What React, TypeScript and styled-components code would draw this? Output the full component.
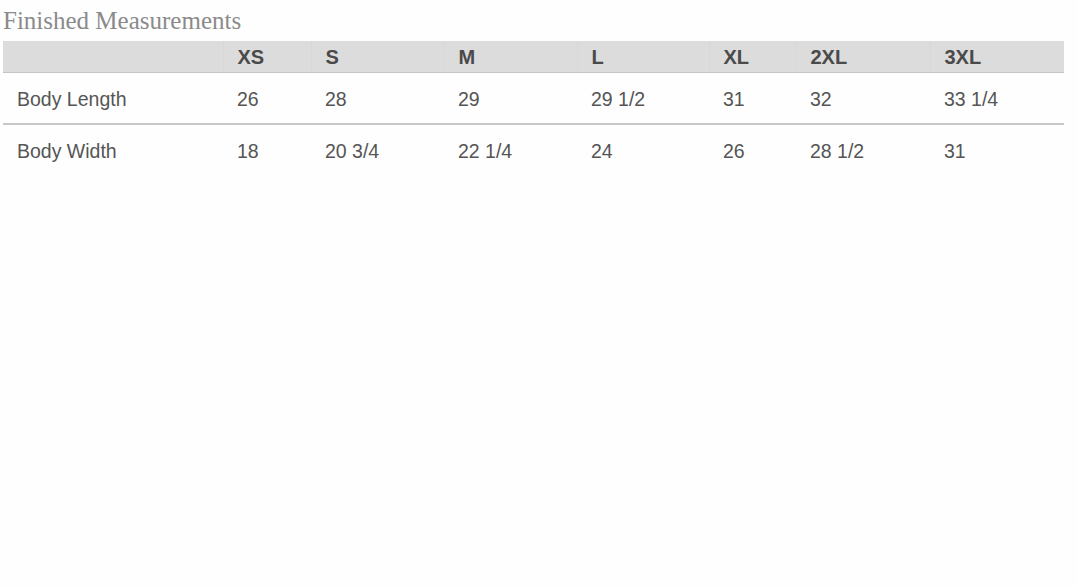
import React from "react";
import styled, {createGlobalStyle} from "styled-components";

const sizes = ["XS", "S", "M", "L", "XL", "2XL", "3XL"];
const widths = [220, 88, 133, 133, 132, 87, 134, 134];

const rows = [
  {label: "Body Length", values: ["26", "28", "29", "29 1/2", "31", "32", "33 1/4"]},
  {label: "Body Width", values: ["18", "20 3/4", "22 1/4", "24", "26", "28 1/2", "31"]},
];

const GlobalStyle = createGlobalStyle`
  body {
    margin: 0;
    background: #fefefe;
  }
`;

const Page = styled.div`
  padding: 5px 14px 0 3px;
`;

const Title = styled.h3`
  margin: 0 0 5px;
  font-family: "Liberation Serif", "Times New Roman", serif;
  font-weight: normal;
  font-size: 25px;
  line-height: 31px;
  color: #8a8a8a;
`;

const Table = styled.table`
  width: 1061px;
  border-collapse: collapse;
  table-layout: fixed;
  font-family: "Liberation Sans", Arial, sans-serif;
`;

const HeadCell = styled.th`
  padding: 5px 14px 4px;
  line-height: 22px;
  text-align: left;
  font-size: 20px;
  font-weight: bold;
  color: #4a4a4a;
  background: #dcdcdc;
  border-bottom: 1px solid #c4c4c4;
  border-left: 1px solid #d8d8d8;

  &:first-child {
    border-left: none;
  }
`;

const Row = styled.tr<{ $last?: boolean }>`
  border-bottom: ${p => (p.$last ? "none" : "2px solid #c8c8c8")};
`;

const Cell = styled.td`
  padding: 15px 14px 13px;
  line-height: 22px;
  font-size: 19.5px;
  color: #555;
  white-space: nowrap;
`;

export default function App() {
  return (
    <>
      <GlobalStyle/>
      <Page>
        <Title>Finished Measurements</Title>
        <Table>
          <colgroup>
            {widths.map((w, i) => <col key={i} style={{width: w}}/>)}
          </colgroup>
          <thead>
            <tr>
              <HeadCell/>
              {sizes.map(s => <HeadCell key={s}>{s}</HeadCell>)}
            </tr>
          </thead>
          <tbody>
            {rows.map((r, i) => (
              <Row key={r.label} $last={i === rows.length - 1}>
                <Cell>{r.label}</Cell>
                {r.values.map((v, j) => <Cell key={j}>{v}</Cell>)}
              </Row>
            ))}
          </tbody>
        </Table>
      </Page>
    </>
  );
}
